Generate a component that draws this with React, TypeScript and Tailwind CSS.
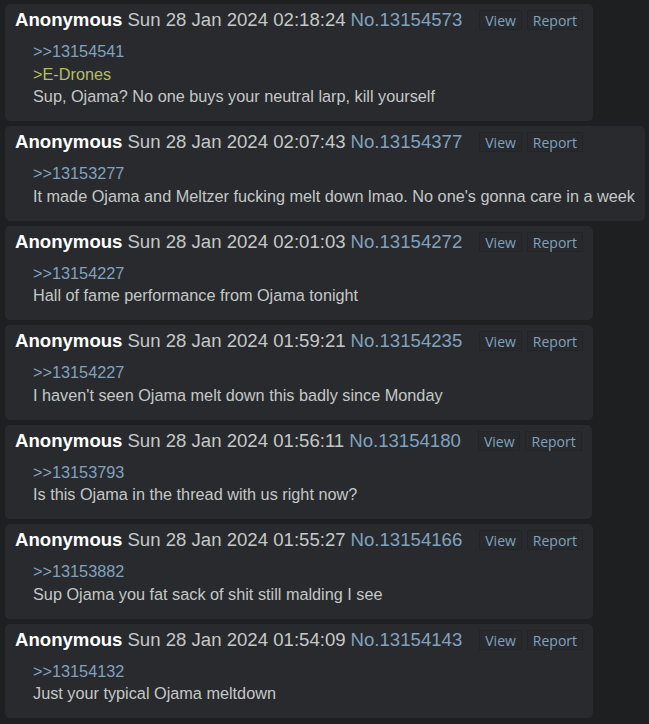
import React from "react";

interface Post {
  no: number;
  date: string;
  quote: number;
  green?: string;
  text: string;
}

const posts: Post[] = [
  { no: 13154573, date: "Sun 28 Jan 2024 02:18:24", quote: 13154541, green: ">E-Drones", text: "Sup, Ojama? No one buys your neutral larp, kill yourself" },
  { no: 13154377, date: "Sun 28 Jan 2024 02:07:43", quote: 13153277, text: "It made Ojama and Meltzer fucking melt down lmao. No one's gonna care in a week" },
  { no: 13154272, date: "Sun 28 Jan 2024 02:01:03", quote: 13154227, text: "Hall of fame performance from Ojama tonight" },
  { no: 13154235, date: "Sun 28 Jan 2024 01:59:21", quote: 13154227, text: "I haven't seen Ojama melt down this badly since Monday" },
  { no: 13154180, date: "Sun 28 Jan 2024 01:56:11", quote: 13153793, text: "Is this Ojama in the thread with us right now?" },
  { no: 13154166, date: "Sun 28 Jan 2024 01:55:27", quote: 13153882, text: "Sup Ojama you fat sack of shit still malding I see" },
  { no: 13154143, date: "Sun 28 Jan 2024 01:54:09", quote: 13154132, text: "Just your typical Ojama meltdown" },
];

function PostCard({ post }: { post: Post }) {
  return (
    <div className="w-fit rounded-[5px] bg-[#282a2e] pt-[5px] pb-[13.5px] pl-[10px] pr-[10px]">
      <div className="flex items-center h-[22px] text-[18.6px] leading-[22px] whitespace-nowrap">
        <span className="font-bold text-white">Anonymous</span>
        <span className="ml-[5px] text-[#c5c8c6]">{post.date}</span>
        <span className="ml-[5px] text-[#81a2be]">No.{post.no}</span>
        <div className="ml-[17px] flex gap-[5px] font-['Open_Sans',sans-serif] text-[14px] text-[#81a2be]">
          <span className="h-[20px] leading-[19px] px-[5px] border border-[#222427] bg-[#27292d]">View</span>
          <span className="h-[20px] leading-[19px] px-[5px] border border-[#222427] bg-[#27292d]">Report</span>
        </div>
      </div>
      <div className="mt-[9px] ml-[18px] text-[16.25px] leading-[22.5px] whitespace-nowrap text-[#c5c8c6]">
        <div className="text-[#81a2be]">&gt;&gt;{post.quote}</div>
        {post.green && <div className="text-[#b5bd68]">{post.green}</div>}
        <div>{post.text}</div>
      </div>
    </div>
  );
}

export default function App() {
  return (
    <div className="min-h-screen bg-[#1d1f21] px-[5px] pt-[4px] font-['Liberation_Sans',Arial,sans-serif] overflow-hidden">
      <div className="flex flex-col gap-[5px]">
        {posts.map((p) => (
          <PostCard key={p.no} post={p} />
        ))}
      </div>
    </div>
  );
}
